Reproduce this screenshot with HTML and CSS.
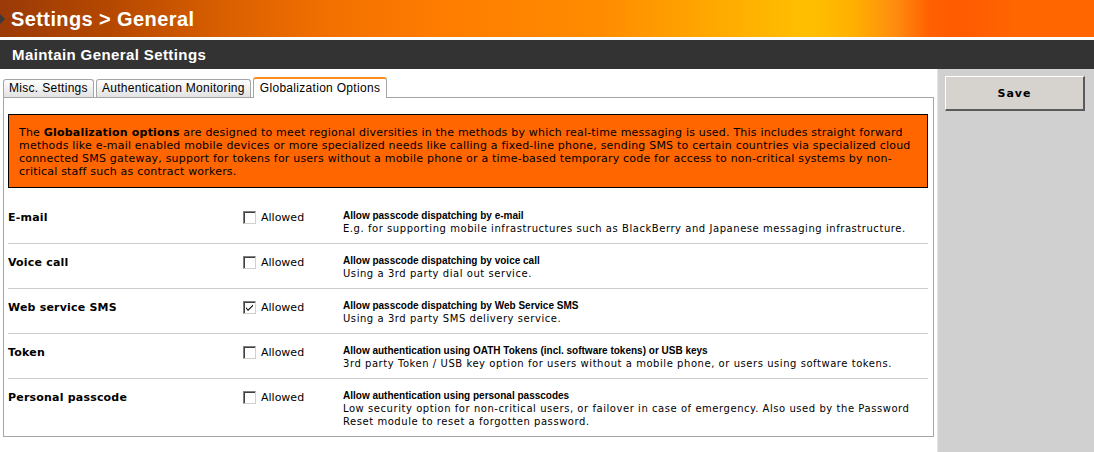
FILE: index.html
```html
<!DOCTYPE html>
<html lang="en">
<head>
<meta charset="utf-8">
<title>Settings &gt; General</title>
<link rel="stylesheet" href="styles.css">
</head>
<body>
<header class="topbar">
  <span class="topbar-arrow"></span>
  <h1 class="topbar-title">Settings &gt; General</h1>
</header>
<div class="subbar">
  <h2 class="subbar-title">Maintain General Settings</h2>
</div>
<div class="main">
  <div class="content">
    <nav class="tabs">
      <span class="tab">Misc. Settings</span>
      <span class="tab">Authentication Monitoring</span>
      <span class="tab tab-active">Globalization Options</span>
    </nav>
    <section class="panel">
      <p class="notice">The <b>Globalization options</b> are designed to meet regional diversities in the methods by which real-time messaging is used. This includes straight forward methods like e-mail enabled mobile devices or more specialized needs like calling a fixed-line phone, sending SMS to certain countries via specialized cloud connected SMS gateway, support for tokens for users without a mobile phone or a time-based temporary code for access to non-critical systems by non-critical staff such as contract workers.</p>
      <div class="rows">
        <div class="row">
          <div class="row-label">E-mail</div>
          <label class="check"><span class="cb"></span>Allowed</label>
          <div class="desc">
            <div class="desc-title">Allow passcode dispatching by e-mail</div>
            <div class="desc-text">E.g. for supporting mobile infrastructures such as BlackBerry and Japanese messaging infrastructure.</div>
          </div>
        </div>
        <div class="row">
          <div class="row-label">Voice call</div>
          <label class="check"><span class="cb"></span>Allowed</label>
          <div class="desc">
            <div class="desc-title">Allow passcode dispatching by voice call</div>
            <div class="desc-text">Using a 3rd party dial out service.</div>
          </div>
        </div>
        <div class="row">
          <div class="row-label">Web service SMS</div>
          <label class="check"><span class="cb cb-checked"><svg viewBox="0 0 11 11" width="11" height="11"><path d="M2 5 L4 7.5 L9 2.5 L9 4 L4 9 L2 6.5 Z" fill="#000"/></svg></span>Allowed</label>
          <div class="desc">
            <div class="desc-title">Allow passcode dispatching by Web Service SMS</div>
            <div class="desc-text">Using a 3rd party SMS delivery service.</div>
          </div>
        </div>
        <div class="row">
          <div class="row-label">Token</div>
          <label class="check"><span class="cb"></span>Allowed</label>
          <div class="desc">
            <div class="desc-title">Allow authentication using OATH Tokens (incl. software tokens) or USB keys</div>
            <div class="desc-text">3rd party Token / USB key option for users without a mobile phone, or users using software tokens.</div>
          </div>
        </div>
        <div class="row">
          <div class="row-label">Personal passcode</div>
          <label class="check"><span class="cb"></span>Allowed</label>
          <div class="desc">
            <div class="desc-title">Allow authentication using personal passcodes</div>
            <div class="desc-text">Low security option for non-critical users, or failover in case of emergency. Also used by the Password Reset module to reset a forgotten password.</div>
          </div>
        </div>
      </div>
    </section>
  </div>
  <aside class="sidebar">
    <button class="save" type="button">Save</button>
  </aside>
</div>
</body>
</html>
```
FILE: styles.css
```css
* { box-sizing: border-box; }
html, body {
  margin: 0;
  padding: 0;
  height: 452px;
  overflow: hidden;
  background: #fff;
  font-family: "DejaVu Sans", Verdana, sans-serif;
  color: #000;
}

.topbar {
  height: 37px;
  display: flex;
  align-items: center;
  background: linear-gradient(90deg, #9a3a08 0%, #b54800 10%, #d85e00 20%, #f27000 30%, #ff7c00 40%, #ff8c00 55%, #ffa800 65%, #ffc000 74%, #ffb000 78%, #ff8a10 82%, #ff6000 85%, #ff5a00 88%, #ff6600 93%, #ff6600 100%);
}
.topbar-arrow {
  width: 0;
  height: 0;
  border-top: 5px solid transparent;
  border-bottom: 5px solid transparent;
  border-left: 5px solid #3a3a3a;
  margin-right: 6px;
}
.topbar-title {
  margin: 0;
  font-family: "Liberation Sans", Arial, sans-serif;
  font-weight: bold;
  font-size: 20px;
  letter-spacing: 0.4px;
  color: #fff;
  line-height: 1;
  padding-top: 1px;
}

.subbar {
  margin-top: 3px;
  height: 29px;
  background: #333333;
  display: flex;
  align-items: center;
  padding-left: 12px;
}
.subbar-title {
  margin: 0;
  font-family: "Liberation Sans", Arial, sans-serif;
  font-weight: bold;
  font-size: 15px;
  letter-spacing: 0.4px;
  color: #fff;
}

.main {
  display: flex;
  height: 383px;
}
.content {
  width: 937px;
  padding: 8px 3px 0 3px;
}
.sidebar {
  flex: 1;
  background: #d0d0d0;
  border-left: 1px solid #e4e4e4;
  padding: 7px 0 0 7px;
}
.save {
  width: 140px;
  height: 35px;
  background: #d6d3ce;
  border-top: 1px solid #ffffff;
  border-left: 1px solid #ffffff;
  border-right: 2px solid #5a5a5a;
  border-bottom: 2px solid #5a5a5a;
  font-family: "DejaVu Sans", Verdana, sans-serif;
  font-weight: bold;
  font-size: 11px;
  letter-spacing: 1px;
  color: #000;
  padding: 1px 0 0 0;
}

.tabs {
  display: flex;
  align-items: flex-end;
  gap: 2px;
  height: 20px;
}
.tab {
  height: 18px;
  line-height: 16px;
  padding: 0 5px;
  border: 1px solid #a5a5a5;
  border-bottom: none;
  border-radius: 3px 3px 0 0;
  background: linear-gradient(#ffffff, #e2e2e2);
  font-family: "Liberation Sans", Arial, sans-serif;
  font-size: 12px;
  letter-spacing: 0.3px;
  color: #000;
  white-space: nowrap;
}
.tab-active {
  position: relative;
  z-index: 1;
  height: 21px;
  margin-bottom: -1px;
  padding: 0 6px;
  line-height: 18px;
  border-top: 2px solid #ff8c1a;
  background: #fff;
}

.panel {
  border: 1px solid #a5a5a5;
  padding: 16px 5px 0 4px;
  height: 340px;
}
.notice {
  margin: 0 0 11px 0;
  background: #ff6600;
  border: 1px solid #000;
  padding: 11px 10px 9px 10px;
  font-size: 11px;
  line-height: 13px;
  letter-spacing: 0.2px;
}
.notice b { font-weight: bold; }

.row {
  display: grid;
  grid-template-columns: 235px 100px 1fr;
  padding: 10px 0 8px 0;
  border-bottom: 1px solid #cccccc;
}
.row:last-child { border-bottom: none; }
.row-label {
  font-weight: bold;
  font-size: 11px;
  line-height: 13px;
  padding-top: 2px;
  letter-spacing: 0.2px;
}
.check {
  display: flex;
  align-items: center;
  gap: 5px;
  height: 15px;
  padding-top: 2px;
  font-size: 11px;
  line-height: 13px;
}
.cb {
  width: 13px;
  height: 13px;
  border: 1px solid;
  border-color: #808080 #d4d0c8 #d4d0c8 #808080;
  background: #fff;
  box-shadow: inset 1px 1px 0 #404040;
  display: flex;
  align-items: center;
  justify-content: center;
}
.cb svg { display: block; }
.desc { line-height: 13px; }
.desc-title {
  font-family: "Liberation Sans", Arial, sans-serif;
  font-weight: bold;
  font-size: 10px;
}
.desc-text {
  font-size: 10px;
  letter-spacing: 0.55px;
}
```
